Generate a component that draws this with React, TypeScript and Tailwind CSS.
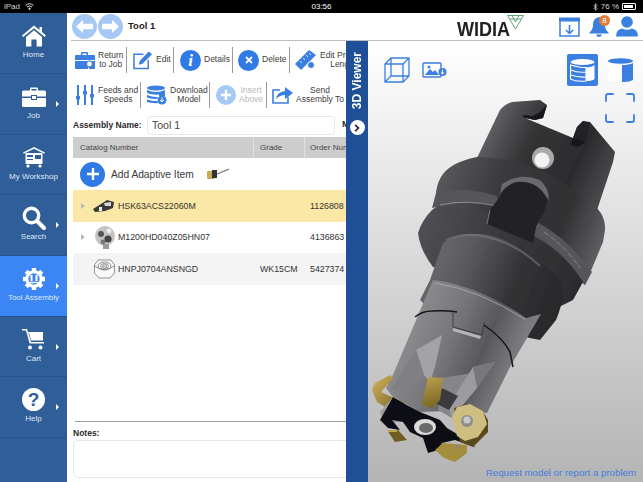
import React from "react";

const B = "#3b7fe0";

function Home() {
  return (
    <svg width="24" height="22" viewBox="0 0 24 22" fill="white">
      <path d="M12 0.5 L17.5 5 V2 H20 V7 L24 10.5 L22.8 12 L12 3.2 L1.2 12 L0 10.5 Z" />
      <path d="M4 12 L12 5.2 L20 12 V21.5 H14.6 V14.5 H9.4 V21.5 H4 Z" />
    </svg>
  );
}
function Job() {
  return (
    <svg width="24" height="20" viewBox="0 0 24 20" fill="white">
      <path d="M8 4 V1.5 Q8 0.5 9 0.5 H15 Q16 0.5 16 1.5 V4 H14.6 V2 H9.4 V4 Z" />
      <path d="M1.5 3.5 H22.5 Q24 3.5 24 5 V9.5 H15 V8 H9 V9.5 H0 V5 Q0 3.5 1.5 3.5 Z" />
      <path d="M0 11 H9 V13 H15 V11 H24 V18.5 Q24 20 22.5 20 H1.5 Q0 20 0 18.5 Z" />
      <rect x="10" y="9" width="4" height="3" />
    </svg>
  );
}
function Workshop() {
  return (
    <svg width="22" height="21" viewBox="0 0 22 21" fill="white">
      <path d="M11 0 L22 5.5 L21.2 6.8 L11 1.8 L0.8 6.8 L0 5.5 Z" />
      <rect x="2.5" y="6" width="17" height="11" rx="1" />
      <rect x="4" y="8" width="6" height="2" fill="#2f5e99" />
      <rect x="12" y="8" width="6" height="4" fill="#2f5e99" />
      <rect x="4" y="12" width="6" height="1" fill="#2f5e99" />
      <circle cx="5" cy="19" r="1.6" />
      <circle cx="17" cy="19" r="1.6" />
    </svg>
  );
}
function SearchI() {
  return (
    <svg width="24" height="24" viewBox="0 0 24 24" fill="none" stroke="white">
      <circle cx="9.5" cy="9.5" r="7.2" strokeWidth="3.4" />
      <path d="M15 15 L22 22" strokeWidth="4" strokeLinecap="round" />
    </svg>
  );
}
function Gear() {
  const teeth = [0, 45, 90, 135, 180, 225, 270, 315];
  return (
    <svg width="22" height="22" viewBox="0 0 22 22">
      {teeth.map((a) => (
        <rect key={a} x="8.8" y="0" width="4.4" height="5" fill="white" transform={`rotate(${a} 11 11)`} />
      ))}
      <circle cx="11" cy="11" r="7.2" fill="none" stroke="white" strokeWidth="3" />
      <path d="M8.5 7 V13 M13.5 7 V13" stroke="white" strokeWidth="2" />
      <path d="M6.5 14.5 H15.5" stroke="white" strokeWidth="1.4" />
    </svg>
  );
}
function Cart() {
  return (
    <svg width="23" height="21" viewBox="0 0 23 21" fill="white">
      <path d="M0 0 H5 L6 3 H21 V4 H6.3 L9 13 H22 V14.5 H7.6 L4 1.6 H0 Z" />
      <path d="M7 4 H21 V11.5 H9 Z" />
      <circle cx="8" cy="18.5" r="2" />
      <circle cx="18.5" cy="18.5" r="2" />
    </svg>
  );
}
function Help() {
  return (
    <div className="w-[23px] h-[23px] rounded-full bg-white flex items-center justify-center text-[#2f5e99] text-[19px] font-bold leading-none">
      ?
    </div>
  );
}

const navItems: { label: string; icon: React.ReactNode; arrow?: boolean; active?: boolean; h: string }[] = [
  { label: "Home", icon: <Home />, h: "h-[61px]" },
  { label: "Job", icon: <Job />, arrow: true, h: "h-[61px]" },
  { label: "My Workshop", icon: <Workshop />, h: "h-[60px]" },
  { label: "Search", icon: <SearchI />, arrow: true, h: "h-[61px]" },
  { label: "Tool Assembly", icon: <Gear />, arrow: true, active: true, h: "h-[61px]" },
  { label: "Cart", icon: <Cart />, arrow: true, h: "h-[60px]" },
  { label: "Help", icon: <Help />, arrow: true, h: "h-[61px]" },
];

function NavItem({ label, icon, arrow, active, h }: (typeof navItems)[number]) {
  return (
    <div
      className={`relative ${h} flex flex-col items-center pt-[10px] border-b border-[#29548b] ${
        active ? "bg-[#3b86f4]" : ""
      }`}
    >
      <div className="h-[25px] flex items-center justify-center">{icon}</div>
      <div className="mt-[2px] text-[8px] leading-[10px] text-[#dfe8f4] whitespace-nowrap">{label}</div>
      {arrow && (
        <div className="absolute left-[56px] top-[27px] w-0 h-0 border-y-[3px] border-y-transparent border-l-[3px] border-l-white" />
      )}
    </div>
  );
}

function ArrowCircle({ dir }: { dir: "l" | "r" }) {
  return (
    <div className="w-[25px] h-[25px] rounded-full bg-[#a6c8f5] flex items-center justify-center">
      <svg width="17" height="13" viewBox="0 0 17 13" fill="white">
        {dir === "l" ? (
          <path d="M0 6.5 L7 0 V3.8 H17 V9.2 H7 V13 Z" />
        ) : (
          <path d="M17 6.5 L10 0 V3.8 H0 V9.2 H10 V13 Z" />
        )}
      </svg>
    </div>
  );
}

function Sep() {
  return <div className="w-[1px] h-[26px] bg-[#9a9a9a] shrink-0" />;
}

function Tool({
  w,
  icon,
  lines,
  dim,
}: {
  w: string;
  icon: React.ReactNode;
  lines: string[];
  dim?: boolean;
}) {
  return (
    <div className={`${w} h-[26px] shrink-0 flex items-center gap-[3px]`}>
      <div className="shrink-0 flex items-center">{icon}</div>
      <div
        className={`text-[8.5px] leading-[9.5px] text-center whitespace-nowrap ${dim ? "text-[#b8b8b8]" : "text-[#3d3d3d]"}`}
      >
        {lines.map((l) => (
          <div key={l}>{l}</div>
        ))}
      </div>
    </div>
  );
}

const IReturn = (
  <svg width="20" height="17" viewBox="0 0 20 17" fill={B}>
    <path d="M6 3 V1 Q6 0 7 0 H12 Q13 0 13 1 V3 H11.6 V1.4 H7.4 V3 Z" />
    <path d="M1 3 H19 Q20 3 20 4 V8 H0 V4 Q0 3 1 3 Z" />
    <path d="M0 9 H13 V17 H1 Q0 17 0 16 Z" />
    <path d="M14 9 H20 V16 Q20 17 19 17 H14 Z" />
    <circle cx="14.5" cy="12" r="3" fill="white" stroke={B} strokeWidth="1.2" />
  </svg>
);
const IEdit = (
  <svg width="20" height="20" viewBox="0 0 21 20" fill="none">
    <path d="M11 4 H1 V19 H16 V10" stroke={B} strokeWidth="1.6" />
    <path d="M6 15 L7 11 L16.5 1 L20 4 L10 14 Z" fill={B} />
  </svg>
);
const IInfo = (
  <div className="w-[21px] h-[21px] rounded-full bg-[#2f7ae5] flex items-center justify-center text-white font-bold italic text-[17px] leading-none [font-family:'Liberation_Serif',serif]">
    i
  </div>
);
const IDelete = (
  <div className="w-[21px] h-[21px] rounded-full bg-[#2f7ae5] flex items-center justify-center">
    <svg width="8" height="8" viewBox="0 0 8 8" stroke="white" strokeWidth="1.8">
      <path d="M1 1 L7 7 M7 1 L1 7" />
    </svg>
  </div>
);
const IRuler = (
  <svg width="22" height="20" viewBox="0 0 22 20">
    <path d="M0 14 L14 0 L21 5 L6 20 Z" fill={B} />
    <path d="M5 11 L7 13 M8 8 L10 10 M11 5 L13 7 M14 3 L16 5" stroke="white" strokeWidth="0.8" />
    <circle cx="16" cy="15" r="3.5" fill={B} stroke="white" />
  </svg>
);
const ISliders = (
  <svg width="20" height="20" viewBox="0 0 20 20" stroke={B} strokeWidth="2">
    <path d="M3 0 V20 M10 0 V20 M17 0 V20" />
    <rect x="1" y="11" width="4" height="3.4" fill={B} stroke="none" />
    <rect x="8" y="6" width="4" height="3.4" fill={B} stroke="none" />
    <rect x="15" y="9" width="4" height="3.4" fill={B} stroke="none" />
  </svg>
);
const IDownload = (
  <svg width="20" height="20" viewBox="0 0 20 20">
    <ellipse cx="9" cy="3" rx="9" ry="2.6" fill={B} />
    <path d="M0 5 Q9 9 18 5 V8 Q9 11.5 0 8 Z M0 10 Q6 12.5 11 12 L10 14 Q4 14 0 12.5 Z M0 14.5 Q5 16 10 16 L12 18 Q4 18.5 0 17 Z M12 7 L18 5 V11 H12 Z" fill={B} />
    <circle cx="15" cy="15" r="4.5" fill={B} />
    <path d="M15 12.5 V17 M13 15 L15 17 L17 15" stroke="white" strokeWidth="1" fill="none" />
  </svg>
);
const IInsert = (
  <div className="w-[20px] h-[20px] rounded-full bg-[#a6c8f5] flex items-center justify-center">
    <svg width="10" height="10" viewBox="0 0 10 10" stroke="white" strokeWidth="2.4">
      <path d="M5 0 V10 M0 5 H10" />
    </svg>
  </div>
);
const ISend = (
  <svg width="21" height="18" viewBox="0 0 21 18" fill="none">
    <path d="M8 4 H1 V17 H16 V11" stroke={B} strokeWidth="1.6" />
    <path d="M4 13 Q5 6 13 5 V1 L21 7 L13 13 V9 Q8 9 4 13 Z" fill={B} />
  </svg>
);

function TurboTool() {
  return (
    <svg width="275" height="441" viewBox="368 41 275 441" className="absolute left-0 top-0">
      <defs>
        <filter id="soft" x="-5%" y="-5%" width="110%" height="110%">
          <feGaussianBlur stdDeviation="0.5" />
        </filter>
        <linearGradient id="shank" gradientUnits="userSpaceOnUse" x1="490" y1="130" x2="610" y2="190">
          <stop offset="0" stopColor="#5e5e62" />
          <stop offset="0.3" stopColor="#343436" />
          <stop offset="0.7" stopColor="#2c2c2e" />
          <stop offset="1" stopColor="#4e4e52" />
        </linearGradient>
        <linearGradient id="flange" gradientUnits="userSpaceOnUse" x1="430" y1="185" x2="600" y2="250">
          <stop offset="0" stopColor="#5c5c60" />
          <stop offset="0.35" stopColor="#3a3a3d" />
          <stop offset="0.75" stopColor="#303033" />
          <stop offset="1" stopColor="#5e5e62" />
        </linearGradient>
        <linearGradient id="disc" gradientUnits="userSpaceOnUse" x1="420" y1="230" x2="590" y2="290">
          <stop offset="0" stopColor="#505054" />
          <stop offset="0.4" stopColor="#3a3a3d" />
          <stop offset="1" stopColor="#2a2a2d" />
        </linearGradient>
        <linearGradient id="neck" gradientUnits="userSpaceOnUse" x1="425" y1="265" x2="565" y2="320">
          <stop offset="0" stopColor="#6a6a6e" />
          <stop offset="0.25" stopColor="#5a5a5e" />
          <stop offset="0.6" stopColor="#333336" />
          <stop offset="1" stopColor="#262628" />
        </linearGradient>
        <linearGradient id="body" gradientUnits="userSpaceOnUse" x1="405" y1="320" x2="530" y2="372">
          <stop offset="0" stopColor="#8f8f92" />
          <stop offset="0.35" stopColor="#77777b" />
          <stop offset="0.62" stopColor="#58585c" />
          <stop offset="0.85" stopColor="#7a7a7e" />
          <stop offset="1" stopColor="#85858a" />
        </linearGradient>
        <linearGradient id="gold" gradientUnits="userSpaceOnUse" x1="372" y1="380" x2="408" y2="412">
          <stop offset="0" stopColor="#cdb05a" />
          <stop offset="1" stopColor="#6b561c" />
        </linearGradient>
        <linearGradient id="gold2" gradientUnits="userSpaceOnUse" x1="430" y1="378" x2="438" y2="408">
          <stop offset="0" stopColor="#b39a4a" />
          <stop offset="1" stopColor="#77641f" />
        </linearGradient>
      </defs>

      <g filter="url(#soft)">
        {/* shank */}
        <path
          d="M477 158 L500 110 Q505 104 512 102 L540 100 L547 105 L543 118 L535 120 L525 118 L573 138 L577 127 L583 121 L590 122 L615 152 L613 162 L597 210 L540 200 Z"
          fill="url(#shank)"
        />
        <path d="M547 105 L543 118 L535 120 L525 118 L522 115 L533 116 L540 112 Z" fill="#18181a" />
        <path d="M573 138 L586 142 L578 147 L570 145 Z" fill="#18181a" />
        <path d="M577 127 L583 121 L590 123 L586 142 L573 138 Z" fill="#232325" />
        <circle cx="543" cy="158" r="11" fill="#a9a9ab" />
        <circle cx="542" cy="160" r="7.5" fill="#f3f3f3" />

        {/* upper flange band */}
        <path
          d="M436 192 Q438 180 443 174 Q452 162 477 157 Q510 158 540 170 Q575 188 597 208 Q606 218 605 230 L603 242 L585 285 L520 240 L440 205 Z"
          fill="url(#flange)"
        />
        {/* lower disc */}
        <path
          d="M418 233 Q422 220 432 210 L440 204 L490 212 L540 228 Q565 240 585 270 L583 282 L573 300 L545 314 L490 290 Q450 272 433 267 Q420 250 418 233 Z"
          fill="url(#disc)"
        />
        {/* ring groove */}
        <path d="M436 193 Q465 186 497 196 L498 206 Q465 198 432 208 Z" fill="#56565a" />
        <path d="M440 205 Q465 199 497 206" stroke="#a8a8aa" strokeWidth="0.7" fill="none" />
        <path d="M537 222 Q570 240 592 272 L585 285 Q565 252 534 236 Z" fill="#55555a" />
        <path d="M544 232 Q565 246 580 268" stroke="#a8a8aa" strokeWidth="0.6" fill="none" strokeDasharray="6 2" />
        {/* key block */}
        <path d="M502 184 Q520 172 540 180 Q549 188 549 200 L545 195 Q535 180 515 182 Q505 186 500 194 Z" fill="#6a6a6e" />
        <path
          d="M499 198 Q505 184 520 182 Q540 182 547 200 Q547 210 539 220 L536 227 L533 243 L487 224 L490 210 Z"
          fill="#232325"
        />
        <path d="M490 210 L487 224" stroke="#9a9a9c" strokeWidth="0.7" />

        {/* neck */}
        <path
          d="M443 243 Q470 226 505 240 Q540 258 558 278 Q568 292 556 320 L540 340 L440 320 L420 300 L430 280 Z"
          fill="url(#neck)"
        />
        <path d="M446 240 Q472 228 508 244 Q525 252 540 266" stroke="#838387" strokeWidth="2.2" fill="none" opacity="0.5" />

        {/* body */}
        <path
          d="M433 280 Q480 286 526 318 L541 314 L510 367 L487 413 L470 410 L420 412 L392 396 L386 388 L392 377 Z"
          fill="url(#body)"
        />
        <path d="M435 283 Q480 290 526 320" stroke="#b5b5b8" strokeWidth="0.7" fill="none" />
        <path d="M415 317 Q422 311 432 311 Q445 310 457 312" stroke="#151517" strokeWidth="1.5" fill="none" />
        <path d="M484 325 Q503 338 510 352 L513 367" stroke="#151517" strokeWidth="1.5" fill="none" />
        <path d="M453 313 V327 L482 335 L484 323" stroke="#38383a" strokeWidth="0.9" fill="none" />
        <path d="M453 328 L481 336 L480 339 L453 331 Z" fill="#b5b5b8" />

        {/* flutes */}
        <path d="M416 350 L442 335 L435 367 L430 382 L424 375 Z" fill="#a3a3a6" />
        <path d="M416 350 L424 375 L405 396 L392 388 Z" fill="#808084" />
        <path d="M442 378 L478 372 L452 418 L438 410 Z" fill="#85858a" />
        <path d="M473 367 L495 362 L477 388 L452 418 L448 406 Z" fill="#9c9ca0" />
        <path d="M473 367 L477 388 L495 362 Z" fill="#77777b" />
        <path d="M442 388 L458 396 L449 410 L437 404 Z" fill="#3a3a3c" />
        <path d="M428 377 L443 378 L440 400 L432 408 L422 405 Z" fill="url(#gold2)" />

        {/* left insert */}
        <path d="M372 390 L375 383 L390 375 L393 378 L381 392 L405 403 L395 413 L377 402 Z" fill="url(#gold)" />

        {/* face */}
        <path d="M380 412 L392 398 L410 420 L385 424 Z" fill="#9d9da0" />
        <path
          d="M380 420 L393 397 L403 403 L420 412 L440 420 L447 428 L472 443 L475 447 L455 440 L442 443 L438 450 L428 453 L423 438 L410 432 L403 422 L392 420 L400 430 L388 428 Z"
          fill="#111113"
        />
        <ellipse cx="425" cy="427" rx="11" ry="8" fill="#dcdcdc" />
        <ellipse cx="426" cy="428" rx="7" ry="5" fill="#6a6a6a" />
        <path d="M387 430 L398 430 L407 440 L395 442 Z" fill="#6f5c22" />
        <path d="M387 431 L397 431" stroke="#e6cd72" strokeWidth="1.3" />
        <path d="M435 450 L443 443 L467 445 L467 453 L455 462 L444 458 Z" fill="#a48e3e" />
        <circle cx="457" cy="447" r="2" fill="#888" />

        {/* round insert */}
        <path d="M454 408 L466 404 L482 410 L488 420 L488 432 L473 447 L460 442 Z" fill="#5a4a1b" />
        <path d="M452 417 L457 407 L470 404 L483 411 L487 424 L478 437 L465 441 L457 436 Z" fill="#cfbe82" />
        <circle cx="467" cy="421" r="6" fill="#8d8d8d" />
        <circle cx="467" cy="420" r="3.6" fill="#c9c9c9" />
      </g>
    </svg>
  );
}

export default function App() {
  return (
    <div className="w-[643px] h-[482px] overflow-hidden flex flex-col bg-white [font-family:'Liberation_Sans',Arial,sans-serif]">
      {/* status bar */}
      <div className="h-[13px] shrink-0 bg-black text-[#d5d5d5] text-[8px] flex items-center justify-between px-[4px]">
        <div className="w-[120px] flex items-center gap-[5px]">
          <span>iPad</span>
          <svg width="9" height="7" viewBox="0 0 9 7" fill="none" stroke="#e0e0e0" strokeWidth="1">
            <path d="M0.5 2.5 Q4.5 -1 8.5 2.5 M2 4 Q4.5 2 7 4" />
            <circle cx="4.5" cy="5.8" r="0.7" fill="#e0e0e0" />
          </svg>
        </div>
        <span className="text-white">03:56</span>
        <div className="w-[120px] flex items-center justify-end gap-[3px]">
          <svg width="5" height="8" viewBox="0 0 5 8" fill="none" stroke="#d5d5d5" strokeWidth="0.8">
            <path d="M0.5 2 L4 5.5 L2.4 7.4 V0.6 L4 2.5 L0.5 6" />
          </svg>
          <span>76 %</span>
          <div className="w-[14px] h-[7px] border border-white rounded-[1px] p-[1px] mr-[3px]">
            <div className="w-[9px] h-full bg-white" />
          </div>
        </div>
      </div>

      <div className="flex-1 min-h-0 flex">
        {/* sidebar */}
        <div className="w-[67px] shrink-0 bg-[#2f5e99] flex flex-col">
          {navItems.map((n) => (
            <NavItem key={n.label} {...n} />
          ))}
        </div>

        <div className="w-[576px] flex flex-col bg-white">
          {/* header */}
          <div className="h-[28px] shrink-0 flex items-center border-b border-[#bdbdbd] ml-[4px]">
            <div className="ml-[1px] flex gap-[1px] items-center">
              <ArrowCircle dir="l" />
              <ArrowCircle dir="r" />
            </div>
            <div className="ml-[5px] text-[9.5px] font-bold text-[#1c1c1c]">Tool 1</div>
            <div className="ml-auto flex items-center">
              <div className="relative w-[96px] h-[26px] flex items-end">
                <span className="origin-left scale-x-[0.86] text-[21px] leading-[23px] font-bold text-[#222]">WIDIA</span>
                <svg width="17" height="15" viewBox="0 0 17 15" className="absolute left-[50px] top-[1px]" fill="none" stroke="#4f9a64" strokeWidth="0.9">
                  <path d="M0.5 0.5 H16.5 L8.5 14 Z M5 0.5 L8.5 7 L12 0.5 M3 4 H14" />
                </svg>
              </div>
              <div className="ml-[6px] flex items-center">
                <svg width="21" height="20" viewBox="0 0 21 20" fill="none">
                  <path d="M1 4 V19 H20 V4" stroke={B} strokeWidth="1.5" />
                  <rect x="0" y="0.5" width="21" height="4" fill={B} />
                  <path d="M10.5 8 V16.5 M6.8 13 L10.5 16.5 L14.2 13" stroke={B} strokeWidth="1.6" />
                </svg>
                <div className="relative ml-[9px] w-[20px] h-[22px]">
                  <svg width="20" height="21" viewBox="0 0 20 21" fill={B}>
                    <path d="M10 1 Q16 2 16 9 Q16 14 19.5 16.5 V17.5 H0.5 V16.5 Q4 14 4 9 Q4 2 10 1 Z" />
                    <path d="M7 18.5 H13 Q12 21 10 21 Q8 21 7 18.5 Z" />
                  </svg>
                  <div className="absolute left-[10px] top-[-1px] w-[11px] h-[11px] rounded-full bg-[#e07b3c] text-white text-[8px] leading-[11px] text-center">
                    8
                  </div>
                </div>
                <svg width="22" height="21" viewBox="0 0 22 21" fill={B} className="ml-[7px] mr-[5px]">
                  <circle cx="11" cy="6" r="5.8" />
                  <path d="M0 20.5 Q0 13.5 6 12.5 Q11 15 16 12.5 Q22 13.5 22 20.5 Z" />
                </svg>
              </div>
            </div>
          </div>

          <div className="flex-1 min-h-0 flex">
            {/* left panel */}
            <div className="w-[279px] shrink-0 flex flex-col overflow-hidden">
              <div className="h-[41px] shrink-0 pt-[6px] flex items-start">
                <div className="w-[8px] shrink-0" />
                <Tool w="w-[51px]" icon={IReturn} lines={["Return", "to Job"]} />
                <Sep />
                <div className="w-[6px] shrink-0" />
                <Tool w="w-[40px]" icon={IEdit} lines={["Edit"]} />
                <Sep />
                <div className="w-[6px] shrink-0" />
                <Tool w="w-[52px]" icon={IInfo} lines={["Details"]} />
                <Sep />
                <div className="w-[5px] shrink-0" />
                <Tool w="w-[51px]" icon={IDelete} lines={["Delete"]} />
                <Sep />
                <div className="w-[5px] shrink-0" />
                <Tool w="w-[75px]" icon={IRuler} lines={["Edit Product", "Length"]} />
              </div>
              <div className="h-[31px] shrink-0 flex items-start">
                <div className="w-[8px] shrink-0" />
                <Tool w="w-[65px]" icon={ISliders} lines={["Feeds and", "Speeds"]} />
                <Sep />
                <div className="w-[6px] shrink-0" />
                <Tool w="w-[62px]" icon={IDownload} lines={["Download", "Model"]} />
                <Sep />
                <div className="w-[6px] shrink-0" />
                <Tool w="w-[50px]" icon={IInsert} lines={["Insert", "Above"]} dim />
                <Sep />
                <div className="w-[5px] shrink-0" />
                <Tool w="w-[75px]" icon={ISend} lines={["Send", "Assembly To"]} />
              </div>
              <div className="h-[24px] shrink-0 flex items-center pl-[6px] whitespace-nowrap">
                <span className="w-[69px] shrink-0 text-[8.5px] font-bold text-[#2a2a2a]">Assembly Name:</span>
                <div className="ml-[5px] w-[188px] h-[19px] shrink-0 rounded-[4px] border border-[#e8e8e8] pl-[4px] text-[10.5px] leading-[17px] text-[#444]">
                  Tool 1
                </div>
                <span className="ml-[7px] text-[9px] font-bold text-[#2a2a2a]">Manufacturer</span>
              </div>

              <div className="ml-[6px] h-[21px] shrink-0 flex bg-[#cdcdcd] text-[8px] text-[#444] items-stretch whitespace-nowrap">
                <div className="w-[181px] shrink-0 pl-[7px] pt-[1px] flex items-center border-r border-[#e2e2e2]">Catalog Number</div>
                <div className="w-[51px] shrink-0 pl-[6px] pt-[1px] flex items-center border-r border-[#e2e2e2]">Grade</div>
                <div className="pl-[5px] pt-[1px] flex items-center">Order Number</div>
              </div>

              <div className="ml-[6px] h-[32px] shrink-0 flex items-center">
                <div className="ml-[7px] w-[25px] h-[25px] rounded-full bg-[#2f7ae5] flex items-center justify-center">
                  <svg width="12" height="12" viewBox="0 0 12 12" stroke="white" strokeWidth="2.4">
                    <path d="M6 0 V12 M0 6 H12" />
                  </svg>
                </div>
                <span className="ml-[6px] pt-[1px] text-[10.2px] text-[#3a3a3a]">Add Adaptive Item</span>
                <svg width="22" height="12" viewBox="0 0 22 12" className="ml-[13px]">
                  <rect x="0" y="3" width="8" height="8" rx="1" fill="#c9a856" />
                  <rect x="5" y="2" width="5" height="8" fill="#333" />
                  <path d="M10 6 L22 1" stroke="#777" strokeWidth="1.2" />
                </svg>
              </div>

              <Row
                bg="bg-[#fbe7a6]"
                tri
                icon={
                  <svg width="22" height="14" viewBox="0 0 22 14">
                    <path d="M0 10 L8 5 L14 1 L21 3 L20 9 L12 12 L2 13 Z" fill="#3a3a3a" />
                    <path d="M11 4 L18 3 L18 7 L12 7 Z" fill="#d8d8d8" />
                    <rect x="6" y="8" width="3" height="4" fill="#eee" />
                  </svg>
                }
                name="HSK63ACS22060M"
                order="1126808"
              />
              <Row
                bg="bg-white"
                tri
                icon={
                  <svg width="21" height="24" viewBox="0 0 21 24">
                    <circle cx="11" cy="11" r="10" fill="#c4c4c4" />
                    <circle cx="7" cy="9" r="3" fill="#555" />
                    <circle cx="14" cy="14" r="3.6" fill="#444" />
                    <circle cx="9" cy="17" r="2.4" fill="#777" />
                    <circle cx="15" cy="6" r="2.4" fill="#eee" />
                    <rect x="9" y="19" width="6" height="5" fill="#999" />
                  </svg>
                }
                name="M1200HD040Z05HN07"
                order="4136863"
              />
              <Row
                bg="bg-[#f4f4f4]"
                icon={
                  <svg width="21" height="20" viewBox="0 0 21 20" fill="none" stroke="#666" strokeWidth="0.7">
                    <path d="M4 1 H17 L20.5 6 V14 L16 19 H5 L0.5 14 V6 Z" fill="#fafafa" />
                    <path d="M0.5 7 Q10 14 20.5 7" />
                    <ellipse cx="10.5" cy="7" rx="6.5" ry="4" />
                    <ellipse cx="10.5" cy="7" rx="4" ry="2.4" />
                    <ellipse cx="10.5" cy="7" rx="2" ry="1.2" />
                  </svg>
                }
                name="HNPJ0704ANSNGD"
                grade="WK15CM"
                order="5427374"
              />

              <div className="flex-1" />
              <div className="ml-[8px] h-[1px] bg-[#a0a0a0] shrink-0" />
              <div className="ml-[6px] mt-[6px] text-[8.5px] leading-[11px] font-bold text-[#2a2a2a]">Notes:</div>
              <div className="ml-[6px] mt-[1px] mb-[4px] h-[38px] w-[290px] shrink-0 rounded-[5px] border border-[#e6e6e6]" />
            </div>

            {/* strip */}
            <div className="w-[22px] shrink-0 bg-[#1f4f96] flex flex-col items-center">
              <div className="mt-[11px] [writing-mode:vertical-rl] rotate-180 text-white text-[12px] font-bold whitespace-nowrap leading-[14px]">
                3D Viewer
              </div>
              <div className="mt-[11px] w-[15px] h-[15px] rounded-full bg-white flex items-center justify-center">
                <svg width="6" height="8" viewBox="0 0 6 8" fill="none" stroke="#222" strokeWidth="1.7">
                  <path d="M1.2 0.8 L4.4 4 L1.2 7.2" />
                </svg>
              </div>
            </div>

            {/* viewer */}
            <div className="relative flex-1 bg-gradient-to-b from-white to-[#b4b4b4] overflow-hidden">
              <TurboTool />
              <div className="relative flex items-start pt-[13px]">
                <div className="ml-[16px] mt-[3px]">
                  <svg width="26" height="26" viewBox="0 0 26 26" fill="none" stroke={B} strokeWidth="1.3">
                    <path d="M1 7 L7 1 H25 V19 L19 25 H1 Z M1 7 H19 V25 M19 7 L25 1 M7 1 V19 H25 M7 19 L1 25" />
                  </svg>
                </div>
                <div className="ml-[12px] mt-[8px]">
                  <svg width="25" height="16" viewBox="0 0 25 16" fill="none">
                    <rect x="1" y="1" width="18" height="14" rx="1" stroke={B} strokeWidth="1.4" />
                    <path d="M3 13 L8 7 L11 10 L13 8 L17 13 Z" fill={B} />
                    <circle cx="7" cy="5" r="1.5" fill={B} />
                    <circle cx="20.5" cy="10" r="4" fill={B} />
                    <path d="M20.5 7.5 V12 M18.8 10.4 L20.5 12 L22.2 10.4" stroke="white" strokeWidth="0.9" />
                  </svg>
                </div>
                <div className="ml-auto mr-[8px] flex flex-col items-end">
                  <div className="flex items-start gap-[10px] mr-[2px]">
                    <div className="w-[31px] h-[32px] rounded-[2px] bg-[#3b7fe0] flex items-center justify-center">
                      <svg width="25" height="25" viewBox="0 0 25 25">
                        <ellipse cx="12.5" cy="4" rx="12" ry="3" fill="white" />
                        <path d="M0.5 7 Q12 10 16 9.5 V23 Q6 24 0.5 21 Z" fill="none" stroke="white" strokeWidth="1.1" />
                        <path d="M0.5 12 Q8 15 16 14 M0.5 17 Q8 19.5 16 19" stroke="white" strokeWidth="1.1" fill="none" />
                        <path d="M16 9.5 Q22 9 24.5 7 V21 Q22 23 16 23 Z" fill="white" />
                      </svg>
                    </div>
                    <svg width="25" height="25" viewBox="0 0 25 25" className="mt-[4px]">
                      <ellipse cx="12.5" cy="3" rx="12.5" ry="2.8" fill="#3b7fe0" />
                      <path d="M0 5 Q4 7 14 7 V24 Q4 24.5 0 22 Z" fill="white" />
                      <path d="M14 7 Q21 7 25 5 V22 Q21 24.5 14 24 Z" fill="#3b7fe0" />
                    </svg>
                  </div>
                  <div className="mt-[7px]">
                    <svg width="30" height="30" viewBox="0 0 30 30" fill="none" stroke="#3b7fe0" strokeWidth="1.8" strokeLinecap="round">
                      <path d="M1 8 V3 Q1 1 3 1 H8 M22 1 H27 Q29 1 29 3 V8 M29 22 V27 Q29 29 27 29 H22 M8 29 H3 Q1 29 1 27 V22" />
                    </svg>
                  </div>
                </div>
              </div>
              <div className="absolute right-[7px] bottom-[3px] text-[9.7px] leading-[12px] text-[#3f7ce0] whitespace-nowrap">
                Request model or report a problem
              </div>
            </div>
          </div>
        </div>
      </div>
    </div>
  );
}

function Row({
  bg,
  tri,
  icon,
  name,
  grade,
  order,
}: {
  bg: string;
  tri?: boolean;
  icon: React.ReactNode;
  name: string;
  grade?: string;
  order: string;
}) {
  return (
    <div className={`ml-[6px] h-[31.5px] shrink-0 flex items-center whitespace-nowrap text-[8.8px] text-[#333] ${bg}`}>
      <div className="w-[8px] ml-[8px] shrink-0">
        {tri && (
          <div className="w-0 h-0 border-y-[3px] border-y-transparent border-l-[4px] border-l-[#b8b8b8]" />
        )}
      </div>
      <div className="w-[24px] ml-[3px] shrink-0 flex justify-center">{icon}</div>
      <div className="w-[144px] pl-[2px] pt-[1px] shrink-0">{name}</div>
      <div className="w-[50px] pt-[1px] shrink-0">{grade}</div>
      <div className="pt-[1px]">{order}</div>
    </div>
  );
}
